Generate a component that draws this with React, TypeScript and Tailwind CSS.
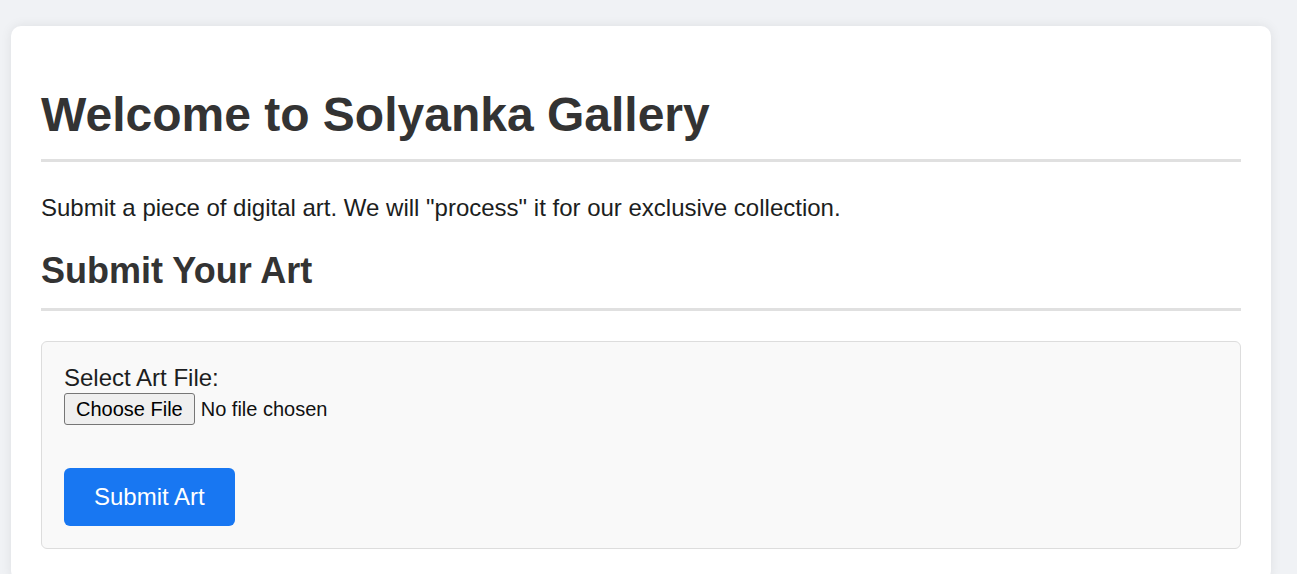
export default function App() {
  return (
    <div className="min-h-[574px] bg-[#f0f2f5] pt-[26px] pl-[11px] pb-10 font-['Liberation_Sans',Arial,sans-serif]">
      <div className="w-[1260px] bg-white rounded-[10px] shadow-[0_0_12px_rgba(0,0,0,0.08)] px-[30px] pt-[60px] pb-8">
        <h1 className="text-[48px] font-bold text-[#333] leading-[1.2] pb-[15px] border-b-[3px] border-[#e0e0e0]">
          Welcome to Solyanka Gallery
        </h1>
        <p className="text-[24px] text-[#1c1e21] leading-[1.15] mt-[32px]">
          Submit a piece of digital art. We will "process" it for our exclusive collection.
        </p>
        <h2 className="text-[36px] font-bold text-[#333] leading-[1.2] mt-[28px] pb-[16px] border-b-[3px] border-[#e0e0e0]">
          Submit Your Art
        </h2>
        <form className="mt-[30px] bg-[#f9f9f9] border border-[#ddd] rounded-[6px] px-[22px] pt-[22px] pb-[22px]">
          <label className="block text-[24px] text-[#1c1e21] leading-[1.15]">Select Art File:</label>
          <input
            type="file"
            className="block mt-[1px] text-[20px] leading-[1.15] text-[#111] file:text-[20px] file:leading-[1.15] file:px-[11px] file:pt-[4px] file:pb-[3px] file:mr-[6px] file:border file:border-[#767676] file:rounded-[3px] file:bg-[#efefef] file:text-black"
          />
          <div className="mt-[43px]">
            <button type="button" className="px-[30px] py-[15px] bg-[#1877f2] text-white text-[24px] leading-[1.15] rounded-[6px]">
              Submit Art
            </button>
          </div>
        </form>
      </div>
    </div>
  );
}
